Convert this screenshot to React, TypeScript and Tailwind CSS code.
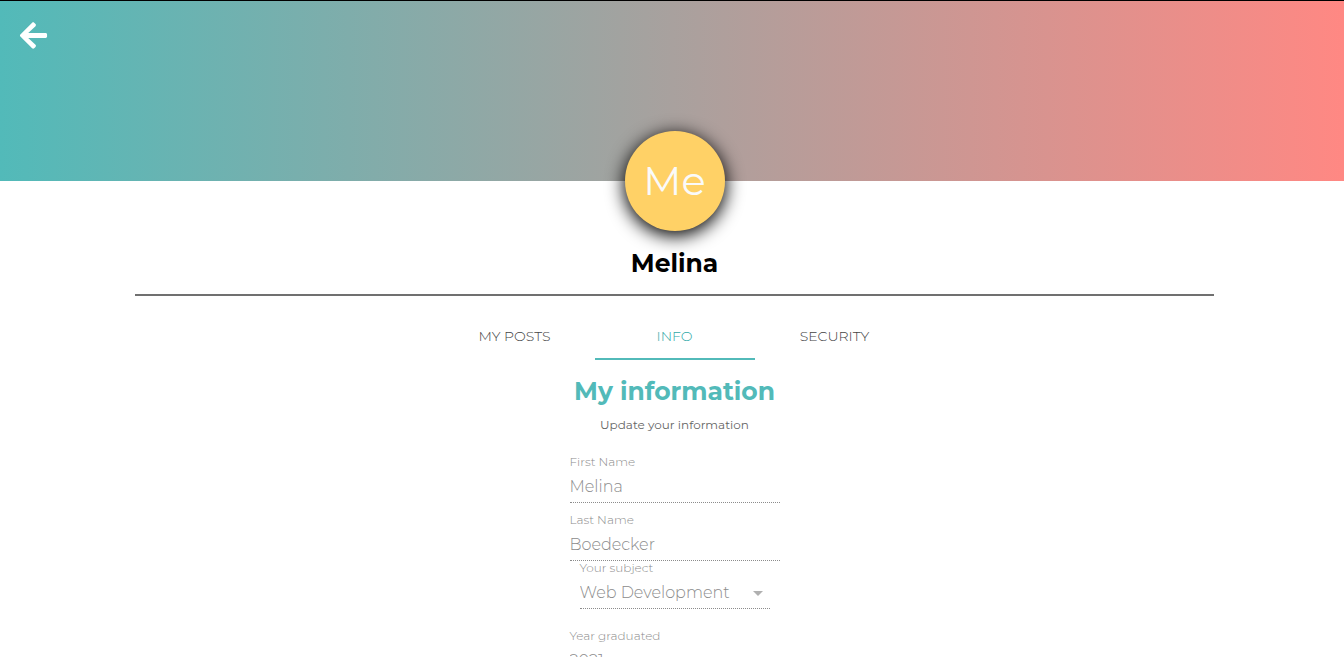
import React from "react";
import { FaArrowLeft } from "react-icons/fa";
import { MdArrowDropDown } from "react-icons/md";

const labelStyle = "text-[12px] leading-[13px] font-light text-[#8c8c8c]";
const controlStyle = "mt-1 block h-7 w-full appearance-none bg-transparent text-[16px] font-light text-[#8c8c8c] opacity-100 outline-none";
const rowStyle = "h-12 border-b border-dotted border-[#8c8c8c]";

function Field({ id, label, value }: { id: string; label: string; value: string }) {
  return (
    <div className={`flex w-[210px] flex-col ${rowStyle}`}>
      <label htmlFor={id} className={labelStyle}>{label}</label>
      <input id={id} defaultValue={value} disabled className={controlStyle} />
    </div>
  );
}

export default function App() {
  return (
    <div className="h-screen overflow-hidden bg-white font-['Montserrat','Inter',sans-serif]">
      <header className="h-[181px] border-t border-black bg-linear-to-r/srgb from-[#52bab9] to-[#ff8883] px-[18px] pt-[19px]">
        <a href="#posts" aria-label="Back" className="inline-block text-white">
          <FaArrowLeft size={31} />
        </a>
      </header>
      <main className="-mt-[50px] flex w-full flex-col items-center pl-[5px]">
        <div className="flex size-[100px] items-center justify-center rounded-full bg-[#ffd166] text-[40px] text-[#fafafa] shadow-[0_4px_18px_1px_rgba(0,0,0,1)]">
          Me
        </div>
        <h1 className="mt-4 text-[25px] leading-8 font-bold text-black">Melina</h1>
        <hr className="mt-[15px] w-[80.6%] border-t-2 border-[#707070]" />
        <nav className="mt-4 flex h-12 text-[14px] font-light">
          <a href="#posts" className="flex w-40 items-center justify-center border-b-2 border-transparent pt-0.5 text-[#444]">MY POSTS</a>
          <a href="#info" className="flex w-40 items-center justify-center border-b-2 border-[#52bab9] pt-0.5 text-[#2fa9a8]">INFO</a>
          <a href="#security" className="flex w-40 items-center justify-center border-b-2 border-transparent pt-0.5 text-[#444]">SECURITY</a>
        </nav>
        <h2 className="mt-[15px] text-[25px] leading-8 font-bold text-[#52bab9]">My information</h2>
        <p className="mt-2 text-[12px] leading-5 text-[#666]">Update your information</p>
        <form className="mt-5 flex flex-col items-center">
          <Field id="first-name" label="First Name" value="Melina" />
          <div className="mt-2.5">
            <Field id="last-name" label="Last Name" value="Boedecker" />
          </div>
          <div className={`relative flex w-[190px] flex-col ${rowStyle}`}>
            <label htmlFor="subject" className={labelStyle}>Your subject</label>
            <select id="subject" disabled className={`${controlStyle} pt-px`}>
              <option>Web Development</option>
            </select>
            <MdArrowDropDown size={24} className="pointer-events-none absolute right-0 bottom-[3px] text-[#b0b0b0]" />
          </div>
          <div className="mt-5">
            <Field id="year" label="Year graduated" value="2021" />
          </div>
        </form>
      </main>
    </div>
  );
}
